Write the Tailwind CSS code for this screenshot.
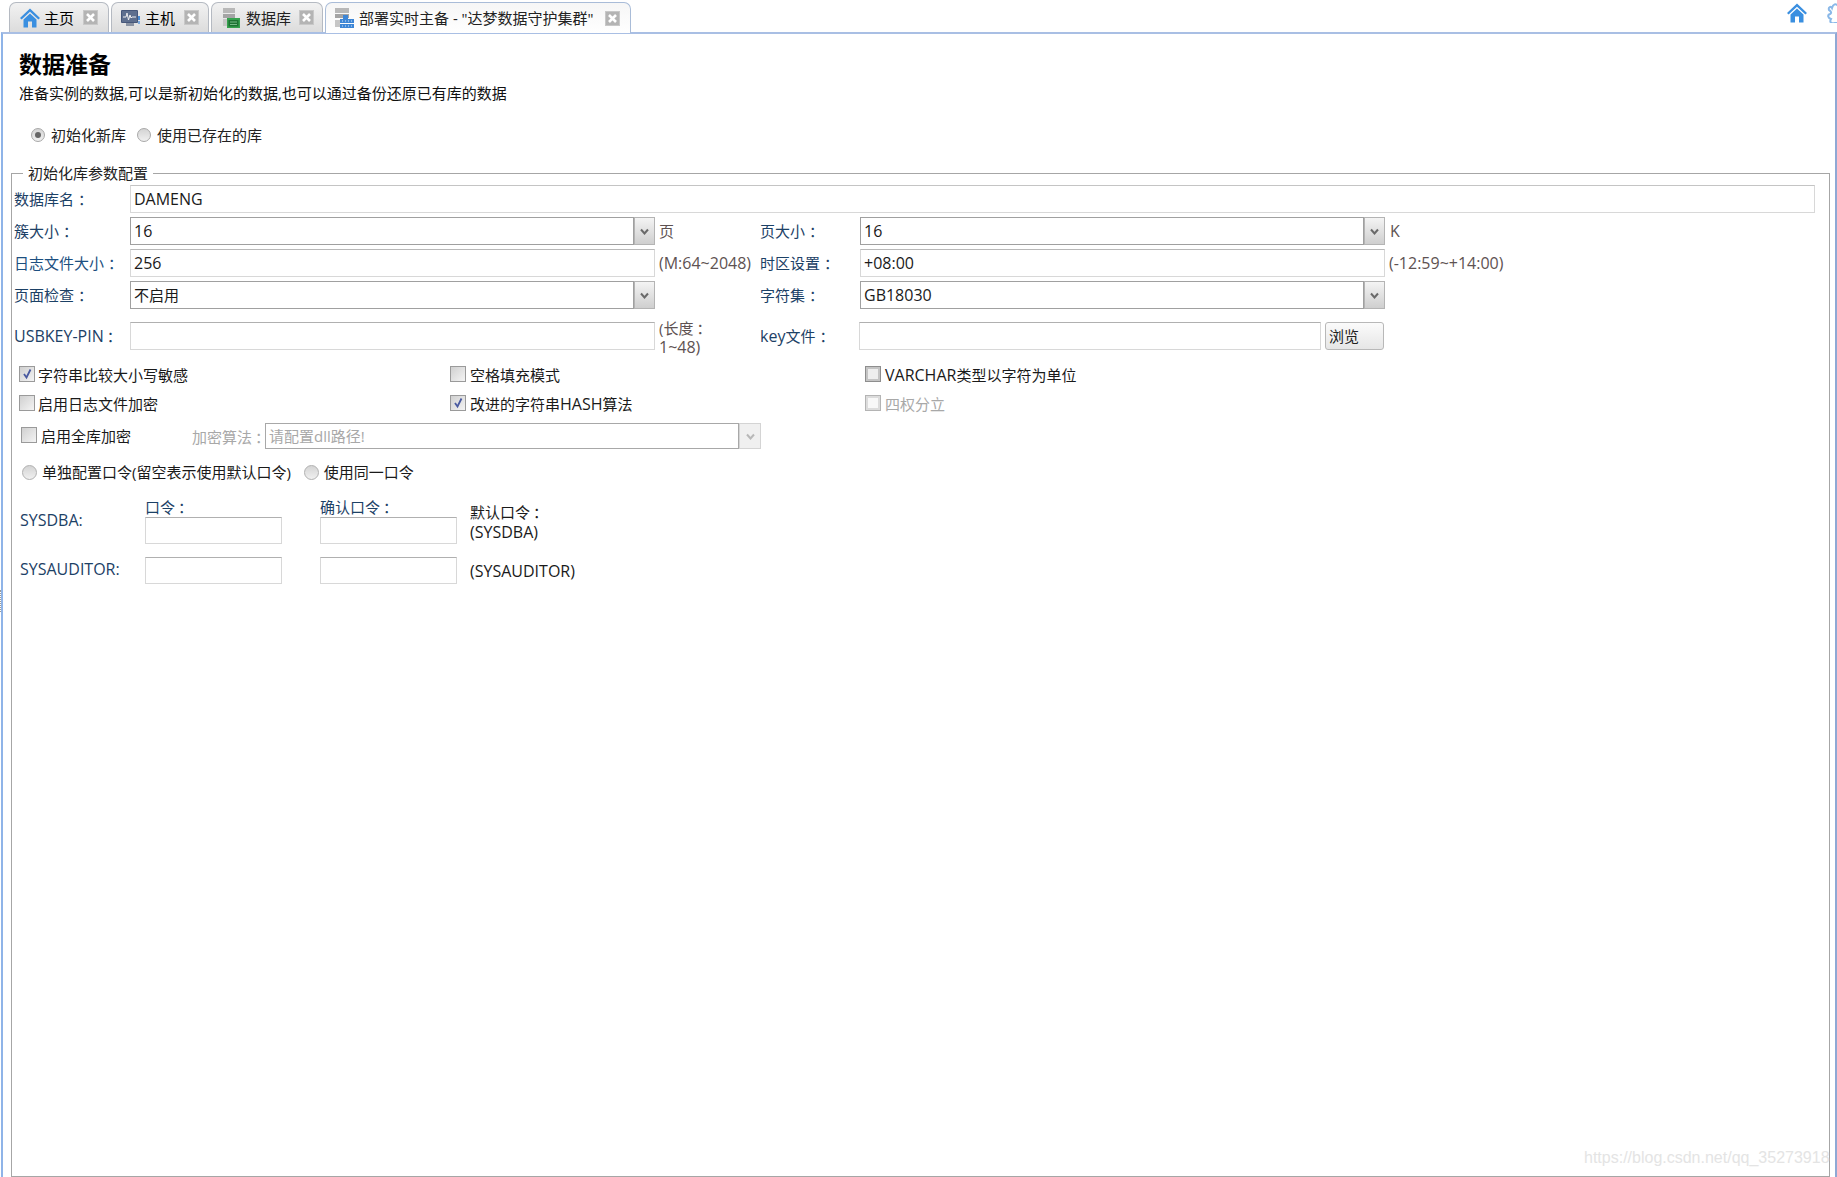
<!DOCTYPE html>
<html lang="zh"><head><meta charset="utf-8">
<script src="https://cdn.jsdelivr.net/npm/@tailwindcss/browser@4"></script>
</head>
<body class="bg-white">
<div class="relative w-[1837px] h-[1177px] overflow-hidden bg-white text-[15px] leading-5 text-[#1a1a1a] font-['Open_Sans','Noto_Sans_CJK_SC',sans-serif]">

  <!-- tab bar -->
  <div class="relative flex h-8 pt-0.5 pl-[9px] gap-[2px] items-start">
    <div class="flex items-center h-[30px] w-[100px] pl-[10px] pr-[10px] rounded-t-[7px] border border-b-0 border-[#b5bac2] bg-gradient-to-b from-[#f2f2f2] to-[#dcdcdc] text-black">
      <svg class="w-5 h-5 mr-[4px]" viewBox="0 0 20 20"><path d="M10 .5 0 10 1.600 11.600 10 3.800 18.400 11.600 20 10z" fill="#3a8fe0"/><path d="M3.500 11.500 10 5.500 16.500 11.500V19.500H12V13.500H8V19.500H3.500z" fill="#3a8fe0"/></svg>
      <span>主页</span>
      <span class="ml-auto flex items-center justify-center w-[15px] h-[15px] bg-[#b4b4b4] border border-[#c8c8c8]"><svg class="w-[11px] h-[11px]" viewBox="0 0 11 11"><path d="M2 2 9 9M9 2 2 9" stroke="#fff" stroke-width="2.600"/></svg></span>
    </div>
    <div class="flex items-center h-[30px] w-[98px] pl-[9px] pr-[9px] rounded-t-[7px] border border-b-0 border-[#b5bac2] bg-gradient-to-b from-[#f2f2f2] to-[#dcdcdc] text-black">
      <svg class="w-5 h-5 mr-[4px]" viewBox="0 0 20 20"><rect x="0" y="2" width="17" height="13" rx="1" fill="#46577a"/><rect x="1" y="3" width="15" height="11" fill="#5e6f8e"/><path d="M2 9H5L6 5 7.500 12 9 7 10 10 11 9H15" stroke="#eee" stroke-width="1" fill="none"/><rect x="5" y="15" width="8" height="3" fill="#8a93a3"/><rect x="17" y="8" width="2" height="4" fill="#4a8ad0"/><rect x="17" y="13" width="2" height="3" fill="#7aa8dc"/></svg>
      <span>主机</span>
      <span class="ml-auto flex items-center justify-center w-[15px] h-[15px] bg-[#b4b4b4] border border-[#c8c8c8]"><svg class="w-[11px] h-[11px]" viewBox="0 0 11 11"><path d="M2 2 9 9M9 2 2 9" stroke="#fff" stroke-width="2.600"/></svg></span>
    </div>
    <div class="flex items-center h-[30px] w-[112px] pl-[10px] pr-[8px] rounded-t-[7px] border border-b-0 border-[#b5bac2] bg-gradient-to-b from-[#f2f2f2] to-[#dcdcdc] text-[#222]">
      <svg class="w-5 h-5 mr-[4px]" viewBox="0 0 20 20"><rect x="1" y="0" width="12" height="5" fill="#b8b8b8"/><rect x="1" y="6" width="12" height="4" fill="#a4a4a4"/><rect x="1" y="11" width="4" height="7" fill="#c6c6c6"/><rect x="5" y="10" width="13" height="10" fill="#36a24e"/><rect x="6.500" y="12" width="10" height="6.500" fill="#1d7333"/><path d="M8 14H15M8 16.500H15" stroke="#8fcf9f" stroke-width=".8"/></svg>
      <span>数据库</span>
      <span class="ml-auto flex items-center justify-center w-[15px] h-[15px] bg-[#b4b4b4] border border-[#c8c8c8]"><svg class="w-[11px] h-[11px]" viewBox="0 0 11 11"><path d="M2 2 9 9M9 2 2 9" stroke="#fff" stroke-width="2.600"/></svg></span>
    </div>
    <div class="relative z-10 flex items-center h-[31px] w-[306px] pl-[9px] pr-[10px] rounded-t-[7px] border border-b-0 border-[#a9bcd8] bg-gradient-to-b from-[#f6f6f6] to-white text-[#222]">
      <svg class="w-5 h-5 mr-[4px]" viewBox="0 0 20 20"><rect x="0" y="0" width="14" height="5" fill="#b8b8b8"/><rect x="0" y="6" width="14" height="4" fill="#a4a4a4"/><rect x="0" y="12" width="5" height="7" fill="#c6c6c6"/><rect x="8" y="7" width="5" height="4" fill="#3d86d6"/><rect x="5" y="11" width="14" height="4" fill="#3d86d6"/><rect x="5" y="16" width="14" height="4" fill="#3d86d6"/><path d="M7 13H17M7 18H17" stroke="#cfe2f7" stroke-width="1" stroke-dasharray="1 2"/></svg>
      <span class="whitespace-nowrap">部署实时主备 - "达梦数据守护集群"</span>
      <span class="ml-auto flex items-center justify-center w-[15px] h-[15px] bg-[#b4b4b4] border border-[#c8c8c8]"><svg class="w-[11px] h-[11px]" viewBox="0 0 11 11"><path d="M2 2 9 9M9 2 2 9" stroke="#fff" stroke-width="2.600"/></svg></span>
    </div>
    <div class="absolute right-0 top-[3px] flex items-start gap-[20px] w-[50px] overflow-hidden">
      <svg class="w-5 h-5 shrink-0" viewBox="0 0 20 20"><path d="M10 .5 0 10 1.600 11.600 10 3.800 18.400 11.600 20 10z" fill="#3a8fe0"/><path d="M3.500 11.500 10 5.500 16.500 11.500V19.500H12V13.500H8V19.500H3.500z" fill="#3a8fe0"/></svg>
      <svg class="w-5 h-5 shrink-0" viewBox="0 0 20 20"><path d="M2 7C1 4 4 3 5 5 6 1 9 0 11 3L20 3V20H8C5 21 2 19.500 4 16 1 15 0 12 3 11 5 10 4 8 2 7z" fill="#fff" stroke="#8ab8e8" stroke-width="2"/></svg>
    </div>
  </div>

  <!-- splitter handle -->
  <div class="absolute left-0 top-[590px] h-[22px] border-l border-dotted border-[#9a9a9a]"></div>

  <!-- content frame -->
  <div class="absolute left-px right-0 top-8 bottom-0 border-l-2 border-r-2 border-t-2 border-l-[#8fb4e8] border-r-[#8fa8d4] border-t-[#a9bfe4] bg-white pl-[8px] pr-[5px]">
    <h1 class="mt-[16px] ml-[8px] text-[23px] leading-7 font-bold text-black">数据准备</h1>
    <p class="mt-[5px] ml-[8px] text-[#111]">准备实例的数据,可以是新初始化的数据,也可以通过备份还原已有库的数据</p>

    <div class="mt-[22px] ml-[20px] flex items-center h-5 text-[#222]">
      <span class="flex items-center justify-center w-[14px] h-[14px] rounded-full border border-[#a8a8a8] bg-gradient-to-b from-[#d4d4d4] to-[#f0f0f0]"><span class="w-[6px] h-[6px] rounded-full bg-[#666]"></span></span>
      <span class="ml-[6px]">初始化新库</span>
      <span class="ml-[11px] w-[14px] h-[14px] rounded-full border border-[#a8a8a8] bg-gradient-to-b from-[#d4d4d4] to-[#f0f0f0]"></span>
      <span class="ml-[6px]">使用已存在的库</span>
    </div>

    <!-- fieldset -->
    <fieldset class="mt-[21px] h-[1011px] border border-[#a6a6a6] pl-[2px] pr-[14px]">
      <legend class="ml-[9px] px-[5px] leading-[15px] text-[#222]">初始化库参数配置</legend>

      <div class="flex items-center h-[28px] mt-[4px]">
        <label class="w-[116px] text-[#1c4166] whitespace-nowrap">数据库名<span class="pl-[4px]">：</span></label>
        <div class="flex-1 h-[28px] pl-[3px] flex items-center border border-[#d8d8d8] border-t-[#c4c4c4] text-[16px] text-[#1a1a1a]">DAMENG</div>
      </div>

      <div class="grid grid-cols-[116px_525px_105px_100px_525px_1fr] auto-rows-[28px] gap-y-[4px] mt-[4px] items-center">
        <label class="text-[#1c4166] whitespace-nowrap">簇大小<span class="pl-[4px]">：</span></label>
        <div class="flex h-[28px]"><div class="flex-1 flex items-center pl-[3px] border border-[#a0a0a0] text-[16px]">16</div><div class="w-[21px] flex items-center justify-center border border-[#b4b4b4] bg-gradient-to-b from-[#f4f4f4] to-[#cfcfcf]"><svg class="w-[9px] h-[7px]" viewBox="0 0 9 7"><path d="M1 1.500 4.500 5.500 8 1.500" fill="none" stroke="#6a6a6a" stroke-width="2"/></svg></div></div>
        <span class="pl-[4px] text-[#5e5252]">页</span>
        <label class="text-[#1c4166] whitespace-nowrap">页大小<span class="pl-[4px]">：</span></label>
        <div class="flex h-[28px]"><div class="flex-1 flex items-center pl-[3px] border border-[#a0a0a0] text-[16px]">16</div><div class="w-[21px] flex items-center justify-center border border-[#b4b4b4] bg-gradient-to-b from-[#f4f4f4] to-[#cfcfcf]"><svg class="w-[9px] h-[7px]" viewBox="0 0 9 7"><path d="M1 1.500 4.500 5.500 8 1.500" fill="none" stroke="#6a6a6a" stroke-width="2"/></svg></div></div>
        <span class="pl-[5px] text-[16px] text-[#5e5252]">K</span>

        <label class="text-[#1c4f80] whitespace-nowrap">日志文件大小<span class="pl-[4px]">：</span></label>
        <div class="h-[28px] flex items-center pl-[3px] border border-[#d8d8d8] border-t-[#b8b8b8] text-[16px]">256</div>
        <span class="pl-[4px] whitespace-nowrap text-[16px] text-[#5e5252]">(M:64~2048)</span>
        <label class="text-[#1c4166] whitespace-nowrap">时区设置<span class="pl-[4px]">：</span></label>
        <div class="h-[28px] flex items-center pl-[3px] border border-[#d8d8d8] border-t-[#b8b8b8] text-[16px]">+08:00</div>
        <span class="pl-[4px] whitespace-nowrap text-[16px] text-[#5e5252]">(-12:59~+14:00)</span>

        <label class="text-[#1c4166] whitespace-nowrap">页面检查<span class="pl-[4px]">：</span></label>
        <div class="flex h-[28px]"><div class="flex-1 flex items-center pl-[3px] border border-[#a0a0a0]">不启用</div><div class="w-[21px] flex items-center justify-center border border-[#b4b4b4] bg-gradient-to-b from-[#f4f4f4] to-[#cfcfcf]"><svg class="w-[9px] h-[7px]" viewBox="0 0 9 7"><path d="M1 1.500 4.500 5.500 8 1.500" fill="none" stroke="#6a6a6a" stroke-width="2"/></svg></div></div>
        <span></span>
        <label class="text-[#1c4166] whitespace-nowrap">字符集<span class="pl-[4px]">：</span></label>
        <div class="flex h-[28px]"><div class="flex-1 flex items-center pl-[3px] border border-[#a0a0a0] text-[16px]">GB18030</div><div class="w-[21px] flex items-center justify-center border border-[#b4b4b4] bg-gradient-to-b from-[#f4f4f4] to-[#cfcfcf]"><svg class="w-[9px] h-[7px]" viewBox="0 0 9 7"><path d="M1 1.500 4.500 5.500 8 1.500" fill="none" stroke="#6a6a6a" stroke-width="2"/></svg></div></div>
        <span></span>
      </div>

      <div class="grid grid-cols-[116px_525px_105px_100px_525px_1fr] grid-rows-[28px] mt-[13px] items-center">
        <label class="text-[16px] text-[#1c4166] whitespace-nowrap">USBKEY-PIN<span class="pl-[3px] text-[15px]">：</span></label>
        <div class="h-[28px] border border-[#d8d8d8] border-t-[#b0b0b0]"></div>
        <span class="self-start -mt-[3px] pl-[4px] leading-[19px] text-[#5e5252]">(长度<span class="pl-[3px]">：</span><br><span class="text-[16px]">1~48)</span></span>
        <label class="text-[#1c4166] whitespace-nowrap"><span class="text-[16px]">key</span>文件<span class="pl-[4px]">：</span></label>
        <div class="flex h-[28px] -ml-[1px] gap-[4px]"><div class="w-[462px] border border-[#d8d8d8] border-t-[#b0b0b0]"></div><div class="w-[59px] flex items-center pl-[3px] rounded-[3px] border border-[#b8b8b8] bg-gradient-to-b from-[#fbfbfb] to-[#e6e6e6] text-[#222]">浏览</div></div>
        <span></span>
      </div>

      <div class="grid grid-cols-[436px_415px_1fr] auto-rows-[29px] mt-[9px]">
        <div class="flex items-center pl-[5px]"><span class="flex items-center justify-center w-[16px] h-[16px] border border-[#9a9a9a] bg-gradient-to-br from-[#d0d0d0] to-[#f4f4f4]"><svg class="w-3 h-3" viewBox="0 0 12 12"><path d="M3 6 5.500 9.500 9.500 1.500" fill="none" stroke="#4a5aa0" stroke-width="1.800"/></svg></span><span class="ml-[3px] mt-[3px]">字符串比较大小写敏感</span></div>
        <div class="flex items-center"><span class="block w-[16px] h-[16px] border border-[#9a9a9a] bg-gradient-to-br from-[#d0d0d0] to-[#f4f4f4]"></span><span class="ml-[4px] mt-[3px]">空格填充模式</span></div>
        <div class="flex items-center"><span class="block w-[16px] h-[16px] border border-[#8e8e8e] shadow-[inset_0_0_0_2px_#c4c4c4] bg-[#eeeeee]"></span><span class="ml-[4px] mt-[3px] whitespace-nowrap"><span class="text-[16px]">VARCHAR</span>类型以字符为单位</span></div>
        <div class="flex items-center pl-[5px]"><span class="block w-[16px] h-[16px] border border-[#9a9a9a] bg-gradient-to-br from-[#d0d0d0] to-[#f4f4f4]"></span><span class="ml-[3px] mt-[3px]">启用日志文件加密</span></div>
        <div class="flex items-center"><span class="flex items-center justify-center w-[16px] h-[16px] border border-[#9a9a9a] bg-gradient-to-br from-[#d0d0d0] to-[#f4f4f4]"><svg class="w-3 h-3" viewBox="0 0 12 12"><path d="M3 6 5.500 9.500 9.500 1.500" fill="none" stroke="#4a5aa0" stroke-width="1.800"/></svg></span><span class="ml-[4px] mt-[3px]">改进的字符串<span class="text-[16px]">HASH</span>算法</span></div>
        <div class="flex items-center"><span class="block w-[16px] h-[16px] border border-[#b4b4b4] shadow-[inset_0_0_0_2px_#dcdcdc] bg-[#f8f8f8]"></span><span class="ml-[4px] mt-[3px] text-[#a8a8a8]">四权分立</span></div>
      </div>

      <div class="flex items-center h-[26px] mt-[6px]">
        <span class="ml-[7px] -mt-[3px] block w-[16px] h-[16px] border border-[#9a9a9a] bg-gradient-to-br from-[#d0d0d0] to-[#f4f4f4]"></span>
        <span class="ml-[4px]">启用全库加密</span>
        <span class="ml-[61px] mt-[1px] text-[#a8a8a8] w-[73px] shrink-0 whitespace-nowrap">加密算法<span class="pl-[3px]">：</span></span>
        <div class="flex w-[496px] h-[26px]"><div class="flex-1 flex items-center pl-[3px] border border-[#a8a8a8] text-[#a8a8a8]">请配置dll路径!</div><div class="w-[22px] flex items-center justify-center border border-[#d4d4d4] bg-[#f0f0f0]"><svg class="w-[9px] h-[7px]" viewBox="0 0 9 7"><path d="M1 1.500 4.500 5.500 8 1.500" fill="none" stroke="#b8b8b8" stroke-width="2"/></svg></div></div>
      </div>

      <div class="flex items-center h-5 mt-[13px] ml-[8px]">
        <span class="w-[15px] h-[15px] rounded-full border border-[#b0b0b0] bg-gradient-to-b from-[#d4d4d4] to-[#f0f0f0]"></span>
        <span class="ml-[5px]">单独配置口令(留空表示使用默认口令)</span>
        <span class="ml-[13px] w-[15px] h-[15px] rounded-full border border-[#b0b0b0] bg-gradient-to-b from-[#d4d4d4] to-[#f0f0f0]"></span>
        <span class="ml-[5px]">使用同一口令</span>
      </div>

      <div class="grid grid-cols-[125px_137px_38px_137px_1fr] grid-rows-[15px_29px_40px] mt-[18px] ml-[6px]">
        <span class="col-start-2 h-[15px] leading-[15px] text-[#1c4166] whitespace-nowrap">口令<span class="pl-[3px]">：</span></span>
        <span class="col-start-4 h-[15px] leading-[15px] text-[#1c4166] whitespace-nowrap">确认口令<span class="pl-[3px]">：</span></span>
        <span class="col-start-1 row-start-2 self-start -mt-[5px] text-[16px] text-[#1c4166]">SYSDBA:</span>
        <div class="col-start-2 row-start-2 mt-[2px] h-[27px] border border-[#d8d8d8] border-t-[#b0b0b0]"></div>
        <div class="col-start-4 row-start-2 mt-[2px] h-[27px] border border-[#d8d8d8] border-t-[#b0b0b0]"></div>
        <span class="col-start-5 row-start-2 self-start pl-[13px] -mt-[13px]">默认口令<span class="pl-[3px]">：</span><br><span class="text-[16px]">(SYSDBA)</span></span>
        <span class="col-start-1 row-start-3 self-start mt-[15px] text-[16px] text-[#1c4166]">SYSAUDITOR:</span>
        <div class="col-start-2 row-start-3 mt-[13px] h-[27px] border border-[#d8d8d8] border-t-[#b0b0b0]"></div>
        <div class="col-start-4 row-start-3 mt-[13px] h-[27px] border border-[#d8d8d8] border-t-[#b0b0b0]"></div>
        <span class="col-start-5 row-start-3 self-start pl-[13px] mt-[17px] text-[16px]">(SYSAUDITOR)</span>
      </div>
    </fieldset>
  </div>

  <!-- watermark -->
  <span class="absolute left-[1584px] top-[1148px] text-[16px] font-['Liberation_Sans',sans-serif] text-[#e4e4e4]">https://blog.csdn.net/qq_35273918</span>
</div>
</body></html>
